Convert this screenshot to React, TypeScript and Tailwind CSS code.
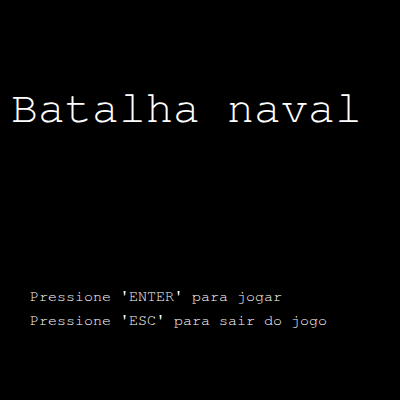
import React from 'react';

const App: React.FC = () => {
  return (
    <div className="w-[400px] h-[400px] bg-black text-white overflow-hidden" style={{ fontFamily: 'FreeMono, "Liberation Mono", monospace' }}>
      <h1 className="pt-[89px] pl-[11px] text-[45px] leading-[40px] font-normal">Batalha naval</h1>
      <div className="mt-[160px] pl-[30px] flex flex-col gap-[9px] text-[15px] leading-[15px]">
        <p>Pressione 'ENTER' para jogar</p>
        <p>Pressione 'ESC' para sair do jogo</p>
      </div>
    </div>
  );
};

export default App;
